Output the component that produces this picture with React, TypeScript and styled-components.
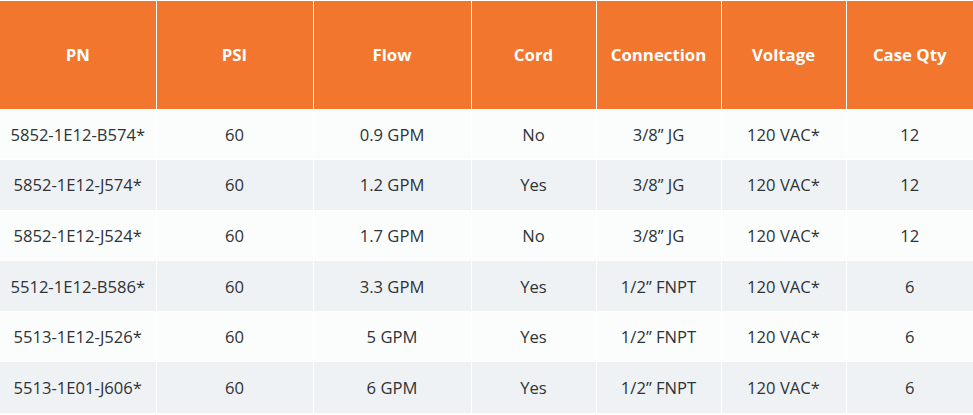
import styled, { createGlobalStyle } from "styled-components";

const GlobalStyle = createGlobalStyle`
  * { box-sizing: border-box; }
  body {
    margin: 0;
    background: #ffffff;
    font-family: "Open Sans", "Noto Sans", Arial, sans-serif;
  }
`;

const columns = ["PN", "PSI", "Flow", "Cord", "Connection", "Voltage", "Case Qty"];
const widths = [156, 157, 158, 125, 125, 125, 127];

const rows = [
  ["5852-1E12-B574*", "60", "0.9 GPM", "No", "3/8\u201D JG", "120 VAC*", "12"],
  ["5852-1E12-J574*", "60", "1.2 GPM", "Yes", "3/8\u201D JG", "120 VAC*", "12"],
  ["5852-1E12-J524*", "60", "1.7 GPM", "No", "3/8\u201D JG", "120 VAC*", "12"],
  ["5512-1E12-B586*", "60", "3.3 GPM", "Yes", "1/2\u201D FNPT", "120 VAC*", "6"],
  ["5513-1E12-J526*", "60", "5 GPM", "Yes", "1/2\u201D FNPT", "120 VAC*", "6"],
  ["5513-1E01-J606*", "60", "6 GPM", "Yes", "1/2\u201D FNPT", "120 VAC*", "6"],
];

const Table = styled.table`
  width: 973px;
  border-collapse: collapse;
  table-layout: fixed;
  margin-top: 1px;
`;

const HeadCell = styled.th`
  height: 108px;
  background: #f2762e;
  color: #ffffff;
  font-size: 16.8px;
  font-weight: 700;
  text-align: center;
  vertical-align: middle;
  border-left: 1px solid #ffffff;
  padding: 0 2px;
  white-space: nowrap;
  &:first-child { border-left: none; }
`;

const Row = styled.tr<{ $alt: boolean }>`
  background: ${({ $alt }) => ($alt ? "#eef2f5" : "#fbfdfd")};
`;

const Cell = styled.td`
  height: 50.6px;
  color: #2e3336;
  font-size: 16.6px;
  text-align: center;
  vertical-align: middle;
  border-left: 1px solid #ffffff;
  border-top: 1px solid #ffffff;
  padding: 0 2px;
  white-space: nowrap;
  &:first-child { border-left: none; }
`;

export default function App() {
  return (
    <>
      <GlobalStyle />
      <Table>
        <colgroup>
          {widths.map((w, i) => (
            <col key={i} style={{ width: w }} />
          ))}
        </colgroup>
        <thead>
          <tr>
            {columns.map((c) => (
              <HeadCell key={c}>{c}</HeadCell>
            ))}
          </tr>
        </thead>
        <tbody>
          {rows.map((r, i) => (
            <Row key={i} $alt={i % 2 === 1}>
              {r.map((v, j) => (
                <Cell key={j}>{v}</Cell>
              ))}
            </Row>
          ))}
        </tbody>
      </Table>
    </>
  );
}
